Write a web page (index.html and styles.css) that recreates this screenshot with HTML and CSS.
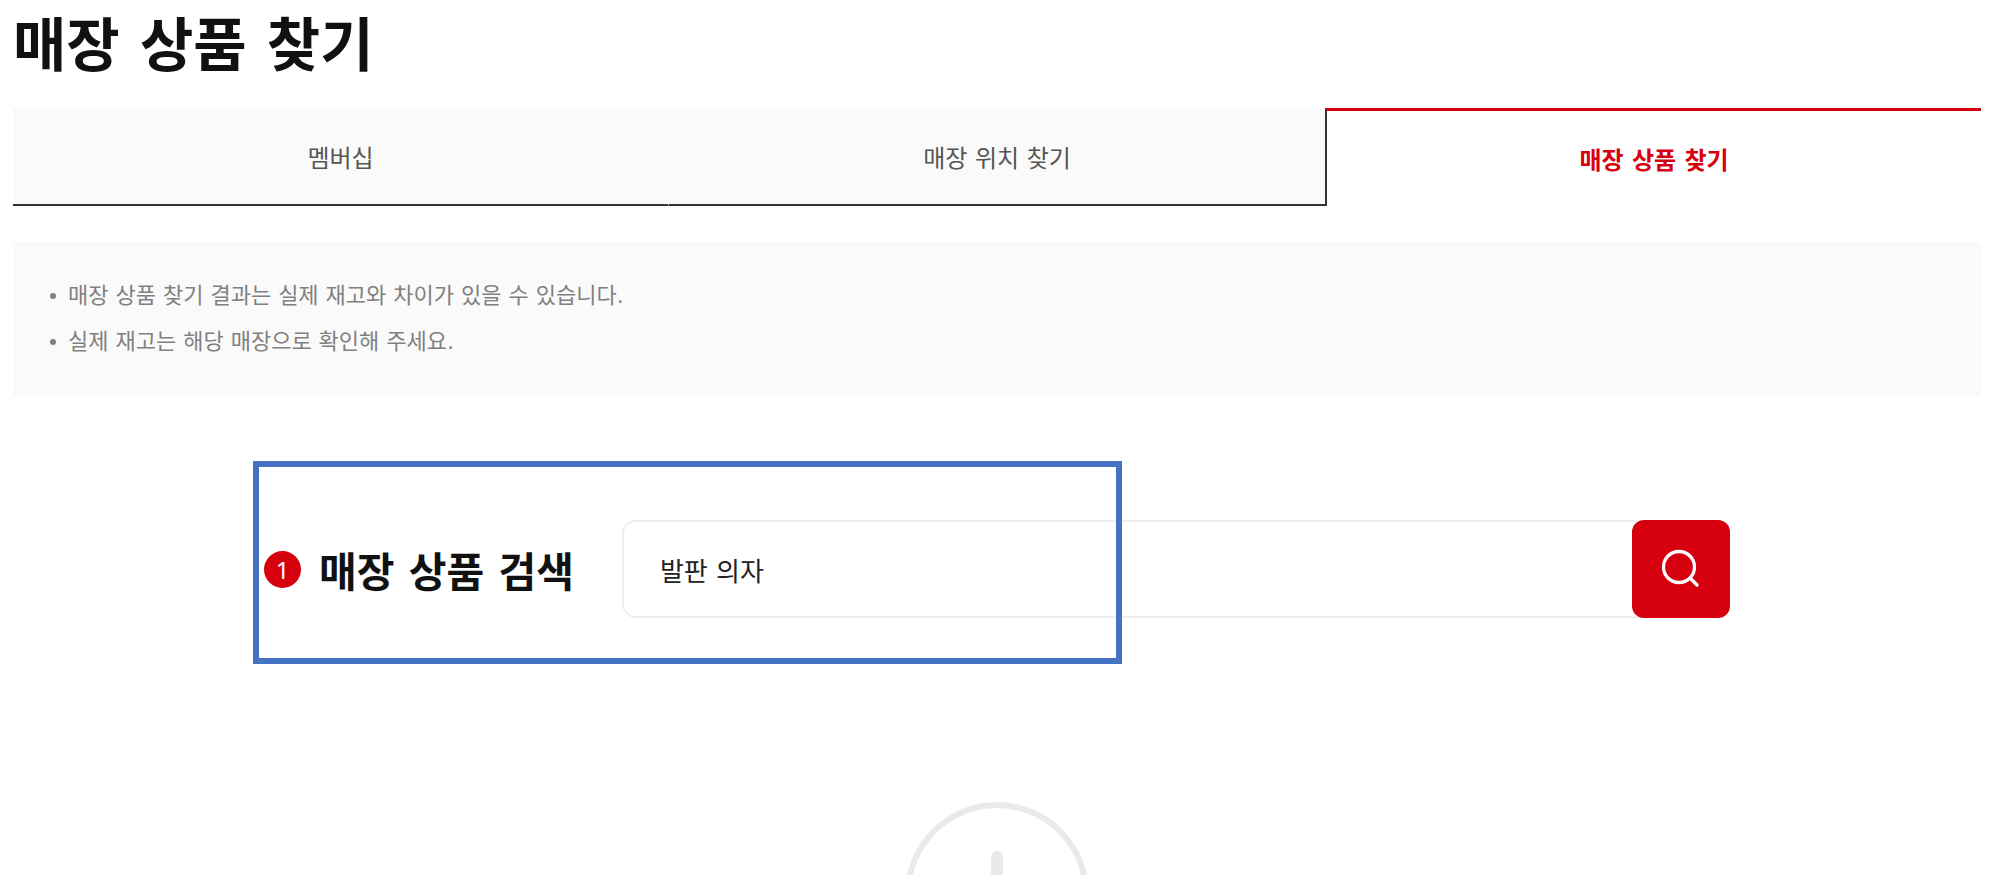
FILE: index.html
```html
<!DOCTYPE html>
<html lang="ko">
<head>
    <meta charset="UTF-8">
    <meta name="viewport" content="width=device-width, initial-scale=1.0">
    <title>매장 상품 찾기</title>
    <link rel="stylesheet" href="styles.css">
</head>
<body>
    <main class="page">
        <h1 class="page-title">매장 상품 찾기</h1>

        <nav class="tabs">
            <a class="tab" href="#membership">멤버십</a>
            <a class="tab" href="#location">매장 위치 찾기</a>
            <a class="tab active" href="#product" aria-current="page">매장 상품 찾기</a>
        </nav>

        <ul class="notice">
            <li>매장 상품 찾기 결과는 실제 재고와 차이가 있을 수 있습니다.</li>
            <li>실제 재고는 해당 매장으로 확인해 주세요.</li>
        </ul>

        <form class="search" onsubmit="return false">
            <span class="step">1</span>
            <label class="search-label" for="keyword">매장 상품 검색</label>
            <div class="search-box">
                <input type="text" id="keyword" class="search-input" value="발판 의자">
                <button type="submit" class="search-btn" aria-label="검색">
                    <svg width="44" height="44" viewBox="0 0 44 44" fill="none" stroke="#fff">
                        <circle cx="20" cy="20" r="15.5" stroke-width="3.3"/>
                        <path d="M31 31l7 7" stroke-width="3.3" stroke-linecap="round"/>
                    </svg>
                </button>
            </div>
            <div class="highlight"></div>
        </form>

        <div class="empty">
            <svg width="184" height="184" viewBox="0 0 184 184" fill="none">
                <circle cx="92" cy="92" r="89" stroke="#eaeaea" stroke-width="6"/>
                <path d="M92 55v42" stroke="#eaeaea" stroke-width="12" stroke-linecap="round"/>
                <circle cx="92" cy="127" r="7" fill="#eaeaea"/>
            </svg>
        </div>
    </main>
</body>
</html>
```

FILE: styles.css
```css
* {
    box-sizing: border-box;
}
body {
    margin: 0;
    background-color: #fff;
    color: #111;
    font-family: "DejaVu Sans", "Noto Sans CJK KR", sans-serif;
}
.page {
    height: 100vh;
    padding: 0 19px 0 13px;
    overflow: hidden;
}
.page-title {
    margin: 0;
    padding: 6px 0 22px;
    font-size: 58px;
    line-height: 80px;
}

/* tabs */
.tabs {
    display: grid;
    grid-template-columns: repeat(3, 1fr);
}
.tab {
    height: 98px;
    border-bottom: 2px solid #333;
    background-color: #fafafa;
    color: #555;
    font-size: 24px;
    line-height: 102px;
    text-align: center;
    text-decoration: none;
}
.tab:first-child {
    border-right: 1px solid #fafafa;
}
.tab.active {
    border-top: 3px solid #d7000f;
    border-bottom: 0;
    border-left: 2px solid #333;
    background-color: #fff;
    color: #d7000f;
    font-weight: bold;
    line-height: 100px;
}

/* notice */
.notice {
    margin: 36px 0 0;
    padding: 31px 37px;
    background-color: #fafafa;
    color: #808080;
    font-size: 22px;
    line-height: 46px;
    list-style: none;
}
.notice li {
    display: flex;
    align-items: center;
    gap: 12px;
}
.notice li::before {
    content: "";
    width: 6px;
    height: 6px;
    border-radius: 50%;
    background-color: #808080;
}

/* search */
.search {
    position: relative;
    display: flex;
    align-items: center;
    max-width: 1466px;
    margin: 124px auto 0;
}
.step {
    width: 37px;
    height: 37px;
    margin-right: 18px;
    border-radius: 50%;
    background-color: #d7000f;
    color: #fff;
    font-family: "Noto Sans", sans-serif;
    font-size: 24px;
    line-height: 37px;
    text-align: center;
}
.search-label {
    margin-right: 48px;
    font-size: 41px;
    font-weight: bold;
    white-space: nowrap;
}
.search-box {
    display: flex;
    flex: 1;
    border-radius: 14px;
    box-shadow: inset 0 0 0 2px #eee;
}
.search-input {
    flex: 1;
    min-width: 0;
    padding: 0 38px;
    border: 0;
    background: none;
    color: #222;
    font-family: inherit;
    font-size: 26px;
    outline: none;
}
.search-btn {
    display: flex;
    align-items: center;
    justify-content: center;
    width: 98px;
    height: 98px;
    padding: 0;
    border: 0;
    border-radius: 12px;
    background-color: #d7000f;
    cursor: pointer;
}
/* marks the part of the form that step 1 is about */
.highlight {
    position: absolute;
    top: -59px;
    left: -11px;
    width: 869px;
    height: 203px;
    border: 6px solid #4472c4;
    pointer-events: none;
}

/* empty result */
.empty {
    margin-top: 184px;
    text-align: center;
}
```
